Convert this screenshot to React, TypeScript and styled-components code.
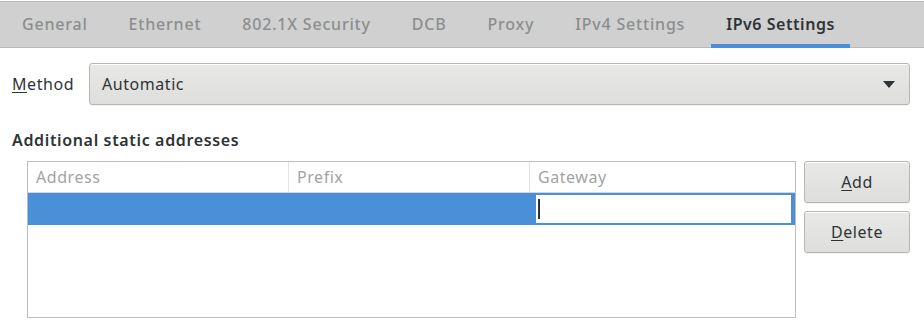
import React from "react";
import styled, { createGlobalStyle } from "styled-components";

const Global = createGlobalStyle`
  html, body { margin: 0; padding: 0; background: #ffffff; }
  body {
    font-family: "Noto Sans", "DejaVu Sans", sans-serif;
    font-size: 16px;
    letter-spacing: 0.55px;
    color: #2e3436;
  }
  * { box-sizing: border-box; }
`;

const Page = styled.div`
  width: 924px;
  height: 324px;
  overflow: hidden;
  padding-top: 1px;
  background: #ffffff;
`;

const TabBar = styled.div`
  display: flex;
  height: 47px;
  padding-left: 7px;
  gap: 11px;
  background: #d0d0d0;
  border-top: 1px solid #b9b9b9;
  border-bottom: 1px solid #b9b9b9;
`;

const Tab = styled.div<{ $active?: boolean }>`
  display: flex;
  align-items: center;
  justify-content: center;
  height: 46px;
  margin-bottom: -1px;
  padding: 2px 15px 0;
  border-bottom: 4px solid ${(p) => (p.$active ? "#4a90d9" : "transparent")};
  color: ${(p) => (p.$active ? "#2e3436" : "#8b8e8f")};
  font-weight: ${(p) => (p.$active ? 600 : 500)};
  letter-spacing: ${(p) => (p.$active ? "0.55px" : "0.8px")};
  white-space: nowrap;
`;

const Body = styled.div`
  padding: 15px 14px 0 12px;
`;

const Row = styled.div`
  display: flex;
  align-items: center;
  gap: 15px;
  height: 42px;
`;

const Label = styled.span`
  white-space: nowrap;
`;

const Mn = styled.span`
  text-decoration: underline;
  text-underline-offset: 2px;
`;

const Combo = styled.div`
  flex: 1;
  height: 42px;
  display: flex;
  align-items: center;
  justify-content: space-between;
  padding: 0 14px 0 12px;
  border: 1px solid #b6b6b3;
  border-radius: 3px;
  background: linear-gradient(#e8e8e7, #dededd);
  box-shadow: inset 0 1px #ffffff, 0 1px rgba(0,0,0,0.05);
`;

const Caret = styled.svg`
  width: 12px;
  height: 7px;
`;

const SectionTitle = styled.div`
  margin-top: 24px;
  font-weight: 600;
  letter-spacing: 0.65px;
  height: 22px;
  line-height: 22px;
`;

const Section = styled.div`
  display: flex;
  gap: 8px;
  margin-top: 10px;
  padding-left: 15px;
`;

const Table = styled.div`
  width: 770px;
  height: 157px;
  border: 1px solid #bdbdbb;
  background: #ffffff;
  display: flex;
  flex-direction: column;
`;

const HeaderRow = styled.div`
  display: grid;
  grid-template-columns: 261px 241px 1fr;
  height: 31px;
  border-bottom: 1px solid #d6d6d4;
`;

const HeaderCell = styled.div<{ $last?: boolean }>`
  display: flex;
  align-items: center;
  padding-left: 8px;
  color: #a1a4a4;
  border-right: ${(p) => (p.$last ? "none" : "1px solid #e3e3e1")};
`;

const SelectedRow = styled.div`
  display: grid;
  grid-template-columns: 261px 241px 1fr;
  height: 32px;
  background: #4a90d9;
`;

const Cell = styled.div``;

const EntryCell = styled.div`
  padding: 1px 3px 1px 5px;
  display: flex;
`;

const Entry = styled.div`
  flex: 1;
  background: #ffffff;
  border: 1px solid #4a90d9;
  box-shadow: inset 0 0 0 1px #ffffff;
  display: flex;
  align-items: center;
  padding-left: 2px;
`;

const Cursor = styled.div`
  width: 2px;
  height: 20px;
  background: #2e3436;
`;

const Buttons = styled.div`
  display: flex;
  flex-direction: column;
  gap: 8px;
`;

const Button = styled.button`
  width: 106px;
  height: 42px;
  border: 1px solid #b6b6b3;
  border-radius: 3px;
  background: linear-gradient(#e8e8e7, #dededd);
  box-shadow: inset 0 1px #ffffff, 0 1px rgba(0,0,0,0.05);
  font-family: inherit;
  font-size: 16px;
  letter-spacing: inherit;
  color: #2e3436;
  padding: 0;
`;

export default function App() {
  const tabs = ["General", "Ethernet", "802.1X Security", "DCB", "Proxy", "IPv4 Settings", "IPv6 Settings"];
  return (
    <>
      <Global />
      <Page>
        <TabBar>
          {tabs.map((t) => (
            <Tab key={t} $active={t === "IPv6 Settings"}>{t}</Tab>
          ))}
        </TabBar>
        <Body>
          <Row>
            <Label><Mn>M</Mn>ethod</Label>
            <Combo>
              <span>Automatic</span>
              <Caret viewBox="0 0 12 7">
                <path d="M0 0 H12 L6 7 Z" fill="#2e3436" />
              </Caret>
            </Combo>
          </Row>
          <SectionTitle>Additional static addresses</SectionTitle>
          <Section>
            <Table>
              <HeaderRow>
                <HeaderCell>Address</HeaderCell>
                <HeaderCell>Prefix</HeaderCell>
                <HeaderCell $last>Gateway</HeaderCell>
              </HeaderRow>
              <SelectedRow>
                <Cell />
                <Cell />
                <EntryCell>
                  <Entry><Cursor /></Entry>
                </EntryCell>
              </SelectedRow>
            </Table>
            <Buttons>
              <Button><Mn>A</Mn>dd</Button>
              <Button><Mn>D</Mn>elete</Button>
            </Buttons>
          </Section>
        </Body>
      </Page>
    </>
  );
}
